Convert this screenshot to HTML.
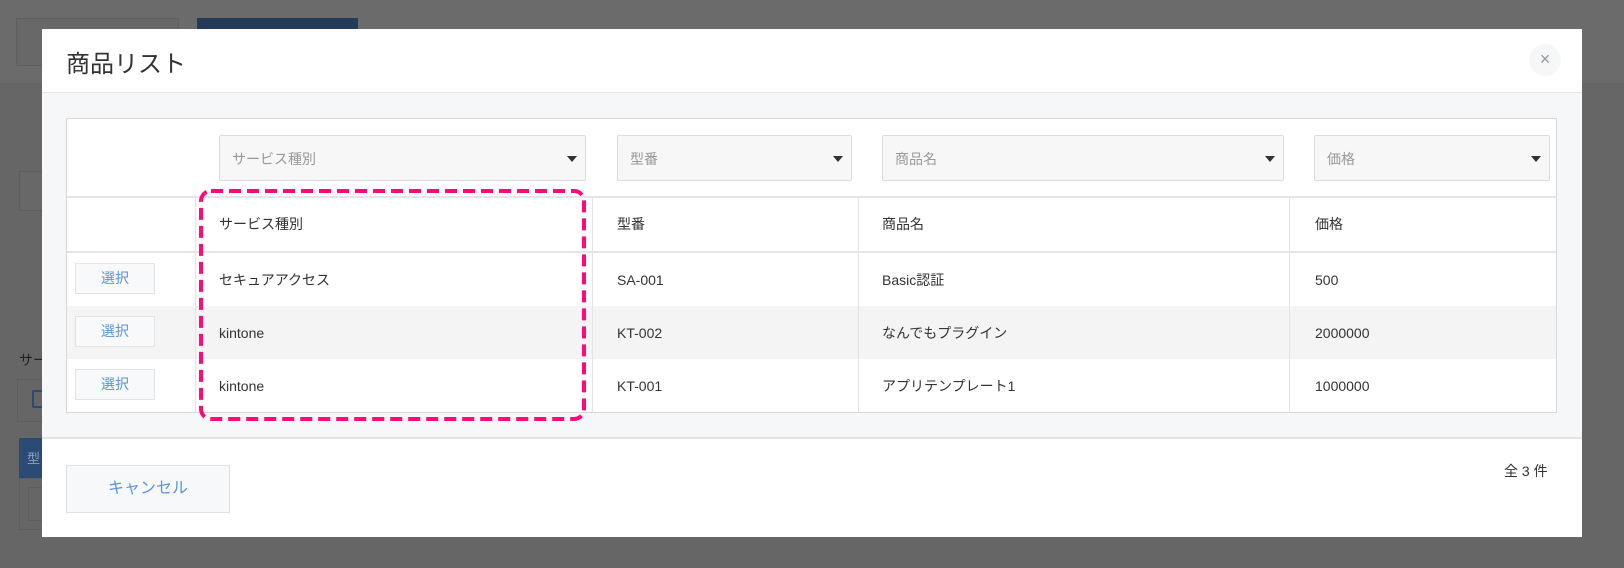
<!DOCTYPE html>
<html><head><meta charset="utf-8"><style>
*{box-sizing:border-box;margin:0;padding:0}
body{width:1624px;height:568px;background:#666;position:relative;overflow:hidden;font-family:"Liberation Sans","Noto Sans CJK JP",sans-serif;color:#333}
.a{position:absolute}
.modal{left:42px;top:29px;width:1540px;height:508px;background:#fff}
.sel{position:absolute;top:135px;height:46px;background:#f7f7f7;border:1px solid #dcdcdc;border-radius:2px;font-size:14px;color:#999;padding:13px 12px;line-height:20px}
.sel:after{content:"";position:absolute;right:8px;top:20px;border-left:5px solid transparent;border-right:5px solid transparent;border-top:6px solid #333}
.t{position:absolute;font-size:14px;color:#333;line-height:20px}
.vl{position:absolute;width:1px;background:#e4e4e4;top:197px;height:215px}
.btn{position:absolute;left:75px;width:80px;height:31px;background:#f7f9fa;border:1px solid #e3e3e3;color:#5a94db;font-size:14px;text-align:center;line-height:29px}
</style></head><body>
<div class="a" style="left:0;top:0;width:1624px;height:83px;background:#6b6b6b"></div>
<div class="a" style="left:16px;top:18px;width:163px;height:48px;border:1px solid #5e5e5e;background:#686868"></div>
<div class="a" style="left:197px;top:18px;width:161px;height:15px;background:#243a5a"></div>
<div class="a" style="left:19px;top:171px;width:30px;height:40px;border:1px solid #5e5e5e;background:#686868"></div>
<div class="a" style="left:19px;top:350px;font-size:14px;color:#222">サー</div>
<div class="a" style="left:17px;top:379px;width:30px;height:43px;border:1px solid #5e5e5e"></div>
<div class="a" style="left:32px;top:390px;width:12px;height:18px;border:2px solid #2b4a75;border-right:none;border-radius:2px"></div>
<div class="a" style="left:19px;top:438px;width:30px;height:40px;background:#2b4a75;color:#8fa3bf;font-size:13px;padding:10px 0 0 8px">型</div>
<div class="a" style="left:19px;top:478px;width:30px;height:52px;border:1px solid #5e5e5e"></div>
<div class="a" style="left:28px;top:487px;width:20px;height:34px;border:1px solid #5e5e5e"></div>

<div class="a modal"></div>
<div class="a" style="left:66px;top:44px;font-size:24px;color:#333">商品リスト</div>
<div class="a" style="left:1529px;top:44px;width:32px;height:32px;border-radius:50%;background:#f6f7f8;color:#999;font-size:18px;text-align:center;line-height:31px">×</div>
<div class="a" style="left:42px;top:92px;width:1540px;height:347px;background:#f6f7f9;border-top:1px solid #e3e3e3;border-bottom:2px solid #e3e5e7"></div>
<div class="a" style="left:66px;top:118px;width:1491px;height:295px;background:#fff;border:1px solid #d8d8d8"></div>
<div class="sel" style="left:219px;width:367px">サービス種別</div>
<div class="sel" style="left:617px;width:235px">型番</div>
<div class="sel" style="left:882px;width:402px">商品名</div>
<div class="sel" style="left:1314px;width:236px">価格</div>
<div class="a" style="left:67px;top:196px;width:1489px;height:2px;background:#e3e5e6"></div>
<div class="a" style="left:67px;top:251px;width:1489px;height:2px;background:#e3e5e6"></div>
<div class="a" style="left:67px;top:306px;width:1489px;height:53px;background:#f4f4f4"></div>
<div class="vl" style="left:195px"></div><div class="vl" style="left:592px"></div><div class="vl" style="left:858px"></div><div class="vl" style="left:1289px"></div>
<div class="t" style="left:219px;top:214px">サービス種別</div><div class="t" style="left:617px;top:214px">型番</div><div class="t" style="left:882px;top:214px">商品名</div><div class="t" style="left:1315px;top:214px">価格</div>
<div class="btn" style="top:263px">選択</div><div class="btn" style="top:316px">選択</div><div class="btn" style="top:369px">選択</div>
<div class="t" style="left:219px;top:270px">セキュアアクセス</div><div class="t" style="left:617px;top:270px">SA-001</div><div class="t" style="left:882px;top:270px">Basic認証</div><div class="t" style="left:1315px;top:270px">500</div>
<div class="t" style="left:219px;top:323px">kintone</div><div class="t" style="left:617px;top:323px">KT-002</div><div class="t" style="left:882px;top:323px">なんでもプラグイン</div><div class="t" style="left:1315px;top:323px">2000000</div>
<div class="t" style="left:219px;top:376px">kintone</div><div class="t" style="left:617px;top:376px">KT-001</div><div class="t" style="left:882px;top:376px">アプリテンプレート1</div><div class="t" style="left:1315px;top:376px">1000000</div>
<div class="a" style="left:66px;top:465px;width:164px;height:48px;background:#f6f8fa;border:1px solid #e0e0e0;color:#5a94db;font-size:16px;text-align:center;line-height:46px">キャンセル</div>
<div class="t" style="left:1504px;top:461px">全 3 件</div>
<svg class="a" style="left:0;top:0" width="1624" height="568"><rect x="201" y="191" width="383" height="228" rx="10" fill="none" stroke="#ff0a78" stroke-width="4" stroke-dasharray="12 6"/></svg>
</body></html>
